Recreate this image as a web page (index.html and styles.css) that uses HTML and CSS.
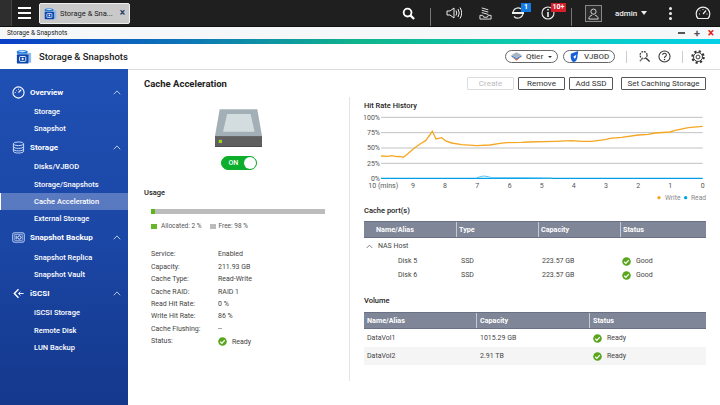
FILE: index.html
```html
<!DOCTYPE html>
<html lang="en">
<head>
<meta charset="utf-8">
<title>Storage &amp; Snapshots</title>
<link rel="stylesheet" href="styles.css">
</head>
<body>
<svg class="defs" width="0" height="0">
  <symbol id="ok" viewBox="0 0 20 20">
    <circle cx="10" cy="10" r="9.5" fill="#5aa51e"/>
    <path d="M5 10.5l3.6 3.6L15 6.8" fill="none" stroke="#fff" stroke-width="2.8"/>
  </symbol>
  <symbol id="chev" viewBox="0 0 10 6">
    <path d="M1 5.2L5 1l4 4.2" fill="none" stroke="currentColor" stroke-width="1"/>
  </symbol>
  <symbol id="app" viewBox="0 0 18 18">
    <path d="M1 3.5C1 1.5 13 1.5 13 3.5V6H1z" fill="#1e78d8"/>
    <path d="M2.5 3.5c2-1.2 7-1.2 9 0-2 1-7 1-9 0z" fill="#bfe0ff"/>
    <rect x="13.5" y="5" width="3.5" height="11" fill="#8db8e8"/>
    <rect x="1" y="6.5" width="13" height="10.5" rx="1" fill="#0d47b0"/>
    <rect x="4" y="9" width="7" height="5.5" rx="1" fill="none" stroke="#fff"/>
    <circle cx="7.5" cy="11.7" r="1.2" fill="#fff"/>
  </symbol>
</svg>

<header class="topbar">
  <div class="edge"></div>
  <div class="menu"><i></i><i></i><i></i></div>
  <div class="tab">
    <svg class="tab-icon"><use href="#app"/></svg>
    <span class="tab-label">Storage &amp; Sna...</span>
    <span class="tab-x">×</span>
  </div>
  <div class="tools">
    <svg class="ti t-search" viewBox="0 0 14 14"><circle cx="6" cy="6" r="4.2" fill="none" stroke="#fff" stroke-width="2"/><path d="M9 9l4 4" stroke="#fff" stroke-width="2.4"/></svg>
    <span class="sep s1"></span>
    <svg class="ti t-sound" viewBox="0 0 16 14"><path d="M1 5h3l4-3v10L4 9H1z" fill="none" stroke="#eee"/><path d="M10 4.5q1.5 2.500 0 5M12 3q2.500 4 0 8M14 1.500q3.500 5.500 0 11" fill="none" stroke="#eee"/></svg>
    <svg class="ti t-stack" viewBox="0 0 14 14"><path d="M3 1l7 2M3 3.500l7 2M3 6l7 2" stroke="#eee" fill="none"/><path d="M1 9h3l1 2h4l1-2h3v4H1z" fill="none" stroke="#eee"/></svg>
    <div class="tb t-update">
      <svg class="ti-in" viewBox="0 0 14 14"><path d="M2 7a5.200 5.200 0 0 1 9-3.500M12 7a5.200 5.200 0 0 1-9 3.500" fill="none" stroke="#eee" stroke-width="1.200"/><rect x="1" y="6" width="12" height="2" fill="#eee"/></svg>
      <span class="badge blue">1</span>
    </div>
    <div class="tb t-info">
      <svg class="ti-in" viewBox="0 0 14 14"><circle cx="7" cy="7" r="6" fill="none" stroke="#eee" stroke-width="1.100"/><path d="M7 3v1.500M7 6v5" stroke="#eee" stroke-width="1.600"/></svg>
      <span class="badge red">10+</span>
    </div>
    <span class="sep s2"></span>
    <div class="user"><svg viewBox="0 0 14 14"><circle cx="7" cy="5" r="2.800" fill="none" stroke="#ddd"/><path d="M2 13c0-3 2-3.500 3.500-4.300M12 13c0-3-2-3.500-3.500-4.300M2 13h10" fill="none" stroke="#ddd"/></svg></div>
    <span class="admin">admin</span>
    <span class="caret"></span>
    <div class="dots"><i></i><i></i><i></i></div>
    <svg class="ti t-gauge" viewBox="0 0 16 14"><path d="M3 12.500a6.800 6.800 0 1 1 10 0z" fill="none" stroke="#eee" stroke-width="1.200"/><path d="M8 8l3-3.500" stroke="#eee" stroke-width="1.200"/><path d="M4 8h1M11.500 8h1M8 3v1M5 4.500l.7.700" stroke="#eee"/></svg>
  </div>
</header>

<div class="titlebar">
  <span class="tb-name">Storage &amp; Snapshots</span>
  <div class="win"><span class="w-min"></span><span class="w-plus">+</span><span class="w-x">×</span></div>
</div>
<div class="strip"></div>

<div class="apphead">
  <svg class="app-icon"><use href="#app"/></svg>
  <span class="app-name">Storage &amp; Snapshots</span>
  <div class="head-right">
    <span class="pill p-q">
      <svg class="pi" viewBox="0 0 14 12"><path d="M7 .5l6.500 3.500L7 7.500.5 4z" fill="#aab4be"/><path d="M.5 6L7 9.500 13.500 6 7 11.500z" fill="#e8673c"/><path d="M.5 4.500L7 8l6.500-3.500v1.500L7 9.500.5 6z" fill="#3a78c8"/></svg>
      Qtier <b class="mini-caret"></b>
    </span>
    <span class="pill p-v">
      <svg class="pi" viewBox="0 0 12 12"><path d="M2 3l8-3-1 8q-1 4-4 4Q1 11 2 3z" fill="#1560d8"/><path d="M5 6l3-2-1 4q-2 1-2-2z" fill="#fff"/></svg>
      VJBOD
    </span>
    <span class="hsep hs1"></span>
    <svg class="hi hi-a" viewBox="0 0 14 14"><circle cx="6" cy="5.500" r="3.800" fill="none" stroke="#333" stroke-width="1.300" stroke-dasharray="2 1"/><path d="M8.500 8.500l4 4" stroke="#333" stroke-width="1.500"/><path d="M2 12l3-3" stroke="#777" stroke-width="1.500"/></svg>
    <svg class="hi hi-q" viewBox="0 0 14 14"><circle cx="7" cy="7" r="6" fill="none" stroke="#333" stroke-width="1.100"/><path d="M5 5.500q0-2 2-2t2 2q0 1-1 1.500T7 8.500" fill="none" stroke="#333" stroke-width="1.100"/><circle cx="7" cy="10.300" r=".8" fill="#333"/></svg>
    <span class="hsep hs2"></span>
    <svg class="hi hi-g" viewBox="0 0 16 16"><circle cx="8" cy="8" r="6.400" fill="none" stroke="#333" stroke-width="2.600" stroke-dasharray="2.500 2.526"/><circle cx="8" cy="8" r="5.100" fill="#fff" stroke="#333" stroke-width="1.100"/><circle cx="8" cy="8" r="2.200" fill="none" stroke="#333" stroke-width="1.100"/></svg>
  </div>
</div>

<div class="body">
  <nav class="side">
    <div class="grp">
      <svg class="gi" viewBox="0 0 14 14"><circle cx="7" cy="7" r="6" fill="none" stroke="#fff" stroke-width="1.200"/><path d="M7 7l3-3" stroke="#fff" stroke-width="1.200"/><path d="M3 7h1M7 3v1M4.500 4.500l.6.600" stroke="#fff"/></svg>
      <span class="gl">Overview</span><svg class="chev"><use href="#chev"/></svg>
    </div>
    <a class="it">Storage</a>
    <a class="it">Snapshot</a>
    <div class="grp">
      <svg class="gi" viewBox="0 0 14 14"><ellipse cx="7" cy="3" rx="5.500" ry="2" fill="none" stroke="#cfe0ff"/><path d="M1.500 3v8c0 2.600 11 2.600 11 0V3M1.500 6c0 2.600 11 2.600 11 0M1.500 8.700c0 2.600 11 2.600 11 0" fill="none" stroke="#cfe0ff"/></svg>
      <span class="gl">Storage</span><svg class="chev"><use href="#chev"/></svg>
    </div>
    <a class="it">Disks/VJBOD</a>
    <a class="it">Storage/Snapshots</a>
    <a class="it on">Cache Acceleration</a>
    <a class="it">External Storage</a>
    <div class="grp">
      <svg class="gi" viewBox="0 0 14 14"><rect x=".8" y="2" width="12.400" height="10" rx="1.500" fill="none" stroke="#cfe0ff"/><rect x="3" y="4" width="8" height="6" fill="none" stroke="#cfe0ff" stroke-width=".6"/><circle cx="8" cy="7" r="1.800" fill="none" stroke="#fff"/><path d="M4.500 5v4" stroke="#fff"/></svg>
      <span class="gl">Snapshot Backup</span><svg class="chev"><use href="#chev"/></svg>
    </div>
    <a class="it">Snapshot Replica</a>
    <a class="it">Snapshot Vault</a>
    <div class="grp">
      <svg class="gi" viewBox="0 0 14 14"><path d="M7 2.500L2.500 7 7 11.500" fill="none" stroke="#fff" stroke-width="1.500"/><path d="M9 5L7 7l2 2" fill="none" stroke="#fff"/><path d="M7.500 7H12.500" stroke="#fff"/></svg>
      <span class="gl">iSCSI</span><svg class="chev"><use href="#chev"/></svg>
    </div>
    <a class="it">iSCSI Storage</a>
    <a class="it">Remote Disk</a>
    <a class="it">LUN Backup</a>
  </nav>

  <main class="main">
    <div class="main-top">
      <h1>Cache Acceleration</h1>
      <div class="btns">
        <button class="btn off b1">Create</button>
        <button class="btn b2">Remove</button>
        <button class="btn b3">Add SSD</button>
        <button class="btn b4">Set Caching Storage</button>
      </div>
    </div>
    <div class="cols">
      <section class="left">
        <div class="hero">
          <svg class="drive" viewBox="0 0 140 112">
            <path d="M14 0H126L140 80H0z" fill="#a3afb6"/>
            <path d="M36 14H106L118 67H24z" fill="#d3dde0"/>
            <rect x="0" y="80" width="140" height="32" fill="#5f5f5f"/>
            <rect x="0" y="110" width="140" height="2" fill="#333"/>
            <circle cx="16" cy="96" r="8" fill="#6d4a8a"/>
            <rect x="11" y="91" width="10" height="10" fill="#8ee000"/>
          </svg>
          <div class="toggle"><span>ON</span><i></i></div>
        </div>
        <h2 class="usage">Usage</h2>
        <div class="bar"><div class="fill" style="width:2.500%"></div></div>
        <div class="legend">
          <i class="sw g"></i><span>Allocated: 2 %</span>
          <i class="sw y"></i><span>Free: 98 %</span>
        </div>
        <dl class="info">
          <dt>Service:</dt><dd>Enabled</dd>
          <dt>Capacity:</dt><dd>211.93 GB</dd>
          <dt>Cache Type:</dt><dd>Read-Write</dd>
          <dt>Cache RAID:</dt><dd>RAID 1</dd>
          <dt>Read Hit Rate:</dt><dd>0 %</dd>
          <dt>Write Hit Rate:</dt><dd>86 %</dd>
          <dt>Cache Flushing:</dt><dd>--</dd>
          <dt>Status:</dt><dd class="st"><svg class="ok"><use href="#ok"/></svg>Ready</dd>
        </dl>
      </section>

      <section class="right">
        <h2>Hit Rate History</h2>
        <svg class="chart" viewBox="27 126 1029 279">
          <g stroke="#b4b4b4" stroke-width="2.500">
            <path d="M78 142H1043M78 188H1043M78 234H1043M78 280H1043"/>
          </g>
          <g class="ylab">
            <text x="75" y="149">100%</text><text x="75" y="195">75%</text><text x="75" y="241">50%</text><text x="75" y="287">25%</text><text x="75" y="332">0%</text>
          </g>
          <path d="M78 258L100 259 110 257 125 260 135 259 145 262 155 254 175 237 195 222 212 212 232 184 243 207 260 203 272 213 290 219 320 224 365 227 405 225 435 220 455 218 500 217 520 216 600 214 650 212 680 214 710 214 750 209 765 205 800 202 850 195 880 193 900 189 945 186 960 181 1000 173 1043 169" fill="none" stroke="#f5a623" stroke-width="4"/>
          <path d="M78 325H1043" stroke="#00a0e8" stroke-width="4"/>
          <path d="M365 323L385 318 400 320 410 323 500 323 590 324" fill="none" stroke="#5cc4f0" stroke-width="3"/>
          <g class="xlab">
            <text x="40" y="355" class="st-a">10 (mins)</text>
            <text x="174" y="355">9</text><text x="270" y="355">8</text><text x="367" y="355">7</text><text x="464" y="355">6</text><text x="560" y="355">5</text><text x="656" y="355">4</text><text x="753" y="355">3</text><text x="850" y="355">2</text><text x="946" y="355">1</text><text x="1043" y="355">0</text>
          </g>
          <circle cx="912" cy="383" r="5" fill="#f5a623"/>
          <text class="lg" x="930" y="390">Write</text>
          <circle cx="992" cy="383" r="5" fill="#00a0e8"/>
          <text class="lg" x="1008" y="390">Read</text>
        </svg>

        <h2 class="h-ports">Cache port(s)</h2>
        <div class="tbl ports">
          <div class="th"><span class="first">Name/Alias</span><span>Type</span><span>Capacity</span><span>Status</span></div>
          <div class="host"><svg class="host-chev"><use href="#chev"/></svg>NAS Host</div>
          <div class="tr"><span class="first">Disk 5</span><span>SSD</span><span>223.57 GB</span><span class="st"><svg class="ok"><use href="#ok"/></svg>Good</span></div>
          <div class="tr"><span class="first">Disk 6</span><span>SSD</span><span>223.57 GB</span><span class="st"><svg class="ok"><use href="#ok"/></svg>Good</span></div>
        </div>

        <h2 class="h-vol">Volume</h2>
        <div class="tbl vols">
          <div class="th"><span>Name/Alias</span><span>Capacity</span><span>Status</span></div>
          <div class="tr"><span>DataVol1</span><span>1015.29 GB</span><span class="st"><svg class="ok"><use href="#ok"/></svg>Ready</span></div>
          <div class="tr alt"><span>DataVol2</span><span>2.91 TB</span><span class="st"><svg class="ok"><use href="#ok"/></svg>Ready</span></div>
        </div>
      </section>
    </div>
  </main>
</div>
</body>
</html>
```

FILE: styles.css
```css
* { box-sizing: border-box; }
html, body { margin: 0; padding: 0; }
body {
  width: 720px; height: 405px; overflow: hidden;
  font-family: Roboto, "Liberation Sans", sans-serif;
  font-size: 7px; color: #3a3a3a; background: #fff;
  display: flex; flex-direction: column;
}
.defs { position: absolute; }

/* top bar */
.topbar { height: 27px; flex: none; background: #1f1f1f; display: flex; align-items: center; border-bottom: 1px solid #111; }
.edge { width: 12px; height: 100%; background: #2e2e2e; border-right: 1px solid #444; flex: none; }
.menu { width: 13px; margin-left: 6px; display: flex; flex-direction: column; gap: 3.500px; }
.menu i { display: block; height: 1.500px; background: #fff; }
.tab { width: 91px; height: 21px; margin-left: 8px; background: #c9c9c9; border: 1px solid #eee; border-radius: 2px; display: flex; align-items: center; padding-left: 4px; color: #222; font-size: 7.500px; }
.tab-icon { width: 13px; height: 13px; flex: none; }
.tab-label { margin-left: 3px; white-space: nowrap; }
.tab-x { margin-left: auto; margin-right: 4px; font-weight: 700; font-size: 10px; color: #1d3a66; line-height: 1; }

.tools { flex: 1; display: flex; align-items: center; height: 100%; position: relative; }
.ti { flex: none; display: block; }
.t-search { width: 13px; height: 13px; margin-left: 272px; }
.sep { width: 1px; height: 18px; background: #777; margin-top: 8px; flex: none; }
.s1 { margin-left: 15px; }
.t-sound { width: 16px; height: 14px; margin-left: 15px; }
.t-stack { width: 13px; height: 13px; margin-left: 17px; }
.tb { position: relative; width: 14px; height: 14px; flex: none; }
.ti-in { width: 14px; height: 14px; display: block; }
.t-update { margin-left: 19px; }
.t-info { margin-left: 16px; }
.badge { position: absolute; top: -3px; left: 10px; height: 9px; color: #fff; font-weight: 700; font-size: 7px; line-height: 9px; padding: 0 1.500px; white-space: nowrap; }
.blue { background: #1479e0; left: 10px; padding: 0 3px; }
.red { background: #d81e2a; left: 10px; }
.s2 { margin-left: 16px; }
.user { width: 17px; height: 17px; margin-left: 13px; border: 1px solid #888; background: #2c2c2c; flex: none; padding: 1px; }
.user svg { display: block; width: 100%; height: 100%; }
.admin { margin-left: 13px; color: #eee; font-weight: 500; font-size: 8px; }
.caret { margin-left: 4px; border: 3px solid transparent; border-top: 4px solid #eee; border-bottom: 0; }
.dots { margin-left: 22px; display: flex; flex-direction: column; gap: 2px; }
.dots i { display: block; width: 3px; height: 3px; background: #eee; border-radius: 50%; }
.t-gauge { width: 16px; height: 14px; margin-left: 23px; }

/* title bar */
.titlebar { height: 12px; flex: none; background: #f6f7f9; display: flex; align-items: center; padding-left: 7px; color: #222; font-size: 6.500px; }
.tb-name { white-space: nowrap; }
.win { margin-left: auto; display: flex; align-items: center; height: 100%; }
.w-min { width: 7px; height: 1.500px; background: #555; margin-right: 8px; }
.w-plus { width: 8px; font-size: 11px; font-weight: 700; color: #555; line-height: 1; text-align: center; margin-right: 6px; }
.w-x { width: 8px; margin-right: 5px; font-size: 12px; font-weight: 700; color: #e01818; line-height: 1; text-align: center; }
.strip { height: 5px; flex: none; background: linear-gradient(90deg, #0b3fc8 0%, #0d74b8 25%, #0fb48c 50%, #0cc8ac 70%, #04d0e8 100%); }

/* app header */
.apphead { height: 25px; flex: none; display: flex; align-items: center; padding-left: 16px; background: #fff; }
.app-icon { width: 16px; height: 17px; flex: none; }
.app-name { margin-left: 7px; font-size: 9.500px; font-weight: 500; color: #222; white-space: nowrap; }
.head-right { flex: 1; display: flex; align-items: center; }
.pill { height: 13px; border: 1px solid #666; border-radius: 7px; display: flex; align-items: center; flex: none; color: #555; font-size: 8px; font-weight: 500; padding-left: 5px; }
.p-q { width: 53px; margin-left: 377px; }
.p-v { width: 52px; margin-left: 5px; }
.pi { width: 11px; height: 11px; margin-right: 4px; flex: none; }
.mini-caret { margin-left: 5px; border: 2px solid transparent; border-top: 2.500px solid #333; border-bottom: 0; }
.hsep { width: 1px; height: 12px; background: #ccc; flex: none; }
.hs1 { margin-left: 11px; }
.hs2 { margin-left: 11px; }
.hi { flex: none; }
.hi-a { width: 13px; height: 13px; margin-left: 11px; }
.hi-q { width: 13px; height: 13px; margin-left: 7px; }
.hi-g { width: 14px; height: 14px; margin-left: 8px; }

/* body */
.body { flex: 1; display: flex; min-height: 0; }
.side { width: 128px; flex: none; background: linear-gradient(180deg, #1f50b4 0%, #1b47a6 50%, #14388c 100%); padding-top: 14px; color: #fff; }
.grp { height: 18px; display: flex; align-items: center; padding-left: 12px; font-weight: 700; font-size: 8px; }
.gi { width: 13px; height: 13px; flex: none; }
.gl { margin-left: 5px; white-space: nowrap; }
.chev { width: 8px; height: 5px; margin-left: auto; margin-right: 7px; color: #dbe6ff; flex: none; }
.it { display: block; height: 17.300px; line-height: 17.300px; padding-left: 34px; font-size: 7.500px; font-weight: 500; color: #fff; white-space: nowrap; }
.grp + .it { margin-top: 1.800px; }
.it + .grp { margin-top: 1.300px; }
.on { background: rgba(255,255,255,.27); border-left: 1px solid #fff; padding-left: 33px; }

.main { flex: 1; min-width: 0; border-top: 1px solid #ddd; display: flex; flex-direction: column; }
.main-top { height: 27px; flex: none; display: flex; align-items: center; padding: 0 14px 0 16px; }
h1 { margin: 0; font-size: 9.500px; font-weight: 700; color: #222; }
.btns { margin-left: auto; display: flex; }
.btn { height: 13px; padding: 0; background: #fff; border: 1px solid #555; font: 400 8px Roboto, sans-serif; color: #333; border-radius: 1px; }
.off { color: #bbb; border-color: #ddd; }
.b1 { width: 47px; }
.b2 { width: 47px; margin-left: 4px; }
.b3 { width: 44px; margin-left: 4px; }
.b4 { width: 85px; margin-left: 8px; }

.cols { flex: 1; display: flex; min-height: 0; }
.left { width: 222px; height: 284px; flex: none; border-right: 1px solid #e4e4e4; padding-left: 16px; }
.hero { display: flex; flex-direction: column; align-items: center; padding-top: 12px; margin-left: -16px; }
.drive { width: 47px; height: 38px; display: block; }
.toggle { width: 36px; height: 14px; margin-top: 9px; border-radius: 7px; background: #0dae2c; border: 1px solid #0dae2c; position: relative; color: #fff; font-size: 7px; font-weight: 500; line-height: 12px; padding-left: 7px; }
.toggle i { position: absolute; right: 0; top: 0; width: 12px; height: 12px; border-radius: 50%; background: #fff; }
h2 { margin: 0; font-size: 7.500px; font-weight: 500; color: #222; }
.usage { margin-top: 18px; }
.bar { margin: 12px 0 0 7px; width: 174px; height: 5px; background: #bcbcbc; }
.fill { height: 100%; background: #5cb51a; }
.legend { display: flex; align-items: center; margin: 8px 0 0 7px; color: #555; height: 8px; font-size: 6.500px; }
.sw { width: 6px; height: 5px; flex: none; margin-right: 4px; }
.g { background: #68b52a; }
.y { background: #bcbcbc; margin-left: 8px; margin-right: 3px; }
.info { margin: 18px 0 0 7px; display: grid; grid-template-columns: 67px 1fr; grid-auto-rows: 12.450px; align-items: center; color: #444; }
.info dt, .info dd { margin: 0; white-space: nowrap; }
.st { display: flex; align-items: center; padding-top: 1px; }
.ok { width: 9px; height: 9px; flex: none; margin-right: 5px; }

.right { flex: 1; padding: 4px 14px 0 14px; min-width: 0; }
.chart { display: block; width: 343px; height: 93px; margin-top: 2.200px; }
.chart text { font-family: Roboto, sans-serif; font-size: 21px; fill: #555; }
.ylab text { text-anchor: end; }
.xlab text { text-anchor: middle; }
.xlab .st-a { text-anchor: start; }
.chart .lg { fill: #888; font-size: 20px; }
.h-ports { margin-top: .6px; }
.tbl { margin-top: 6.600px; color: #444; }
.th { height: 17px; background: #7f8698; display: grid; align-items: center; color: #fff; font-weight: 700; font-size: 7.200px; border-top: 1px solid #6a7184; border-bottom: 1px solid #6a7184; }
.th span { height: 100%; display: flex; align-items: center; border-left: 1px solid #c6cad3; padding-left: 2px; }
.th span:first-child { border-left: 0; }
.tr { display: grid; align-items: center; white-space: nowrap; }
.ports .th, .ports .tr { grid-template-columns: 92px 82px 82px 1fr; }
.ports .th .first { padding-left: 12px; }
.ports .tr { height: 14px; }
.ports .tr .first { padding-left: 34px; }
.ports .tr span:nth-child(2) { padding-left: 5px; }
.ports .tr span:nth-child(3) { padding-left: 4px; }
.ports .tr .st { padding-left: 2px; }
.host { height: 15.500px; display: flex; align-items: center; white-space: nowrap; }
.host-chev { width: 7px; height: 5px; margin: 0 5px 0 2px; color: #555; flex: none; }
.h-vol { margin-top: 14.500px; }
.vols .th, .vols .tr { grid-template-columns: 112px 113px 1fr; }
.vols .th span { padding-left: 3px; }
.vols .tr { height: 18px; padding-left: 3px; }
.vols .tr span:nth-child(2) { padding-left: 1px; }
.vols .tr .st { padding-left: 1px; }
.alt { background: #f5f5f5; }
```
